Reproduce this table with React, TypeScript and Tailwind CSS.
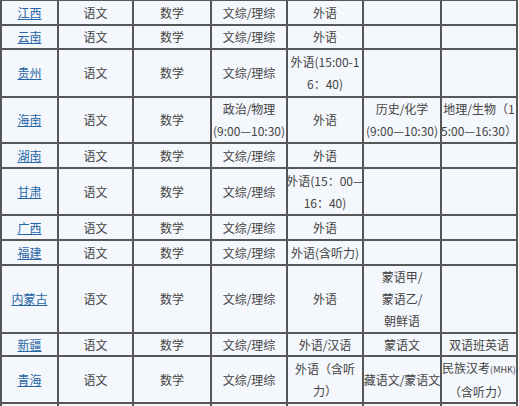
type Row = { cells: string[][] };

// each cell is a list of lines; first cell is the province link
const ROWS: Row[] = [
  { cells: [['江西'], ['语文'], ['数学'], ['文综/理综'], ['外语'], [], []] },
  { cells: [['云南'], ['语文'], ['数学'], ['文综/理综'], ['外语'], [], []] },
  { cells: [['贵州'], ['语文'], ['数学'], ['文综/理综'], ['外语(15:00-1', '6：40)'], [], []] },
  {
    cells: [
      ['海南'],
      ['语文'],
      ['数学'],
      ['政治/物理', '(9:00—10:30)'],
      ['外语'],
      ['历史/化学', '(9:00—10:30)'],
      ['地理/生物（1', '5:00—16:30）'],
    ],
  },
  { cells: [['湖南'], ['语文'], ['数学'], ['文综/理综'], ['外语'], [], []] },
  { cells: [['甘肃'], ['语文'], ['数学'], ['文综/理综'], ['外语(15：00—', '16：40)'], [], []] },
  { cells: [['广西'], ['语文'], ['数学'], ['文综/理综'], ['外语'], [], []] },
  { cells: [['福建'], ['语文'], ['数学'], ['文综/理综'], ['外语(含听力)'], [], []] },
  { cells: [['内蒙古'], ['语文'], ['数学'], ['文综/理综'], ['外语'], ['蒙语甲/', '蒙语乙/', '朝鲜语'], []] },
  { cells: [['新疆'], ['语文'], ['数学'], ['文综/理综'], ['外语/汉语'], ['蒙语文'], ['双语班英语']] },
  {
    cells: [
      ['青海'],
      ['语文'],
      ['数学'],
      ['文综/理综'],
      ['外语（含听', '力）'],
      ['藏语文/蒙语文'],
      ['民族汉考|MHK', '（含听力）'],
    ],
  },
  { cells: [[], [], [], [], [], [], []] },
];

function Line({ text }: { text: string }) {
  // "|" marks the small (MHK) tag
  if (text.includes('|')) {
    const [main, tag] = text.split('|');
    return (
      <span>
        {main}
        <span className="text-[9px]">({tag})</span>
      </span>
    );
  }
  return <span>{text}</span>;
}

export default function App() {
  return (
    <div className="bg-white w-[519px] h-[406px] overflow-hidden font-['Noto_Sans_CJK_SC',sans-serif] text-[12px] text-[#444]">
      <div className="grid w-[518px] grid-cols-[55px_73px_76px_74px_74px_76px_74px] grid-rows-[23px_22px_46px_44px_23px_45px_23px_23px_66px_21px_45px_30px] gap-[2px] bg-[#575757] px-[2px] pt-px">
        {ROWS.map((row, r) =>
          row.cells.map((lines, c) => (
            <div
              key={`${r}-${c}`}
              className="flex flex-col items-center justify-center bg-[#f4f7fc] text-center leading-[22px] whitespace-nowrap"
            >
              {c === 0 && lines.length > 0 ? (
                <a className="text-[#2766a6] underline underline-offset-1 decoration-[#2766a6]">
                  {lines[0]}
                </a>
              ) : (
                lines.map((t, i) => <Line key={i} text={t} />)
              )}
            </div>
          )),
        )}
      </div>
    </div>
  );
}
